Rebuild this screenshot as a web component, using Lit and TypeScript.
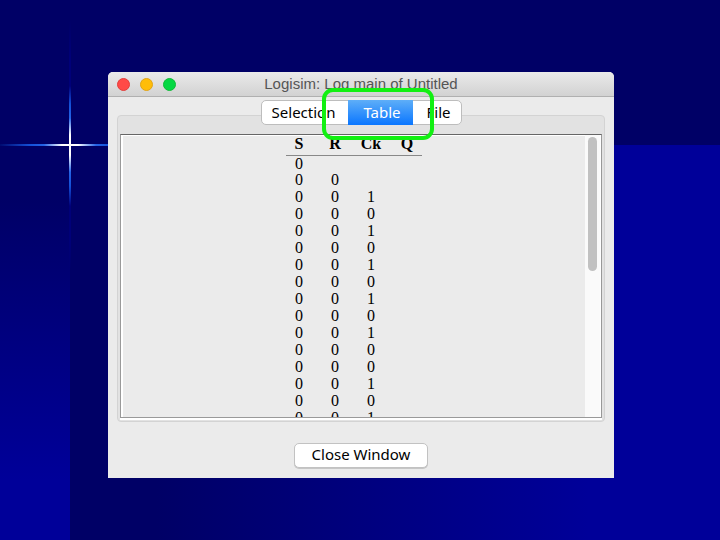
import { LitElement, html, css } from "lit";
import { customElement, state } from "lit/decorators.js";
import { classMap } from "lit/directives/class-map.js";

const SIGNALS = ["S", "R", "Ck", "Q"];

const ROWS: string[][] = [
  ["0", "", "", ""],
  ["0", "0", "", ""],
  ...["1", "0", "1", "0", "1", "0", "1", "0", "1", "0", "0", "1", "0", "1"].map(
    (ck) => ["0", "0", ck, ""]
  ),
];

@customElement("log-table")
export class LogTable extends LitElement {
  static styles = css`
    :host {
      display: flex;
      flex: 1;
      min-height: 0;
      border: 1px solid #999;
      border-top-color: #666;
      box-shadow: 0 2px 0 #fff;
      background: #ebebeb;
    }
    .view {
      flex: 1;
      min-width: 0;
      overflow: hidden;
      border-top: 1px solid #fff;
      border-left: 2px solid #fff;
    }
    .grid {
      margin: 0 auto;
      border-collapse: collapse;
      font: 16px/16px "Liberation Serif", "Times New Roman", serif;
      color: #000;
      table-layout: fixed;
      width: 136px;
    }
    th,
    td {
      box-sizing: border-box;
      width: 36px;
      height: 17px;
      padding: 0;
      text-align: center;
      vertical-align: top;
    }
    th {
      height: 19px;
      border-bottom: 1px solid #888;
    }
    th:first-child,
    td:first-child {
      width: 31px;
      padding-right: 5px;
    }
    th:last-child,
    td:last-child {
      width: 33px;
      padding-left: 3px;
    }
    .track {
      box-sizing: border-box;
      width: 16px;
      padding: 2px 3px 0;
      background: #fafafa;
      border-right: 1px solid #fff;
    }
    .thumb {
      width: 9px;
      height: 48%;
      border-radius: 5px;
      background: #c1c1c1;
    }
  `;

  render() {
    return html`
      <div class="view">
        <table class="grid">
          <thead>
            <tr>
              ${SIGNALS.map((s) => html`<th scope="col">${s}</th>`)}
            </tr>
          </thead>
          <tbody>
            ${ROWS.map(
              (row) => html`<tr>
                ${row.map((v) => html`<td>${v}</td>`)}
              </tr>`
            )}
          </tbody>
        </table>
      </div>
      <div class="track"><div class="thumb"></div></div>
    `;
  }
}

@customElement("app-root")
export class AppRoot extends LitElement {
  @state() private active = "Table";

  static styles = css`
    :host {
      display: flex;
      box-sizing: border-box;
      position: relative;
      height: 100vh;
      padding: 72px 106px 62px 108px;
      overflow: hidden;
      font-family: "Noto Sans", "Open Sans", sans-serif;
      background:
        linear-gradient(#000066, #000066) 0 0 / 100% 145px no-repeat,
        linear-gradient(#000066, #000066 10%, #000099 62%) 0 145px / 70px 100% no-repeat,
        linear-gradient(90deg, #000066, #000066 12%, #000099 72%) 70px 0 / 100% 100% no-repeat;
    }
    .flare-h,
    .flare-v {
      position: absolute;
    }
    .flare-h {
      left: 0;
      top: 144px;
      width: 140px;
      height: 2px;
      background: linear-gradient(90deg, #000a70, #1450d8 30px, #2463e6 44px, #fff 62px, #fff 78px, #2463e6 96px, #1450d8 110px, #000066);
    }
    .flare-v {
      left: 69px;
      top: 20px;
      width: 2px;
      height: 250px;
      background: linear-gradient(#000066, #000078 40px, #000078 66px, #1450d8 84px, #2463e6 98px, #fff 115px, #fff 135px, #2463e6 152px, #1450d8 166px, #000078 186px, #000078 220px, transparent);
    }
    .window {
      position: relative;
      display: flex;
      flex-direction: column;
      flex: 1;
      min-width: 0;
      border-radius: 5px 5px 0 0;
      background: #ebebeb;
    }
    .titlebar {
      display: grid;
      grid-template-columns: 1fr auto 1fr;
      align-items: center;
      box-sizing: border-box;
      height: 25px;
      padding: 0 9px;
      border-bottom: 1px solid #b0b0b0;
      border-radius: 5px 5px 0 0;
      background: linear-gradient(#eaeaea, #d2d2d2);
    }
    .lights {
      display: flex;
      gap: 10px;
    }
    .light {
      box-sizing: border-box;
      width: 13px;
      height: 13px;
      padding: 0;
      border: 1px solid;
      border-radius: 50%;
    }
    .close {
      background: #ff4a47;
      border-color: #e33e3b;
    }
    .minimize {
      background: #ffbd09;
      border-color: #e2a416;
    }
    .zoom {
      background: #05d843;
      border-color: #0fbb38;
    }
    .title {
      margin: 0;
      font: 400 15px/24px "Liberation Sans", Arial, sans-serif;
      color: #555;
      white-space: nowrap;
    }
    .tabs {
      position: relative;
      z-index: 1;
      display: flex;
      align-self: center;
      box-sizing: border-box;
      height: 25px;
      margin-top: 3px;
      border: 1px solid #bdbdbd;
      border-radius: 5px;
      background: #fff;
    }
    .tab {
      position: relative;
      width: 48px;
      padding: 0 0 0 4px;
      border: 0;
      background: none;
      font: 15px/21px "Noto Sans", "Open Sans", sans-serif;
      color: #000;
    }
    .tab:first-child {
      width: 86px;
      padding: 0 2px 0 0;
    }
    .tab.on {
      z-index: 1;
      width: 65px;
      margin: -1px 0;
      color: #fff;
      background: linear-gradient(#5eaef8, #0a76ff);
    }
    .marker {
      position: absolute;
      inset: -12px -21px -15px -26px;
      border: 4px solid #12f012;
      border-radius: 11px;
      pointer-events: none;
    }
    .group {
      display: flex;
      flex: 1;
      min-height: 0;
      margin: -10px 9px 0;
      padding: 18px 2px 3px;
      border: 1px solid #d3d3d3;
      border-radius: 4px;
      background: #e2e2e2;
    }
    .footer {
      display: flex;
      justify-content: center;
      padding: 21px 0 10px;
    }
    .button {
      box-sizing: border-box;
      width: 134px;
      height: 25px;
      padding: 0 0 2px;
      border: 1px solid #c2c2c2;
      border-radius: 5px;
      background: #fff;
      font: 15px/21px "Noto Sans", "Open Sans", sans-serif;
      color: #000;
      box-shadow: 0 1px 0 #c6c6c6;
    }
  `;

  render() {
    return html`
      <div class="flare-h"></div>
      <div class="flare-v"></div>
      <main class="window">
        <header class="titlebar">
          <div class="lights">
            <button class="light close" aria-label="Close"></button>
            <button class="light minimize" aria-label="Minimize"></button>
            <button class="light zoom" aria-label="Zoom"></button>
          </div>
          <h1 class="title">Logisim: Log main of Untitled</h1>
        </header>
        <div class="tabs" role="tablist">
          ${["Selection", "Table", "File"].map(
            (name) => html`<button
              class=${classMap({ tab: true, on: name === this.active })}
              role="tab"
              aria-selected=${name === this.active}
              @click=${() => (this.active = name)}
            >${name}${name === this.active ? html`<span class="marker"></span>` : ""}</button>`
          )}
        </div>
        <section class="group"><log-table></log-table></section>
        <footer class="footer">
          <button class="button">Close Window</button>
        </footer>
      </main>
    `;
  }
}
